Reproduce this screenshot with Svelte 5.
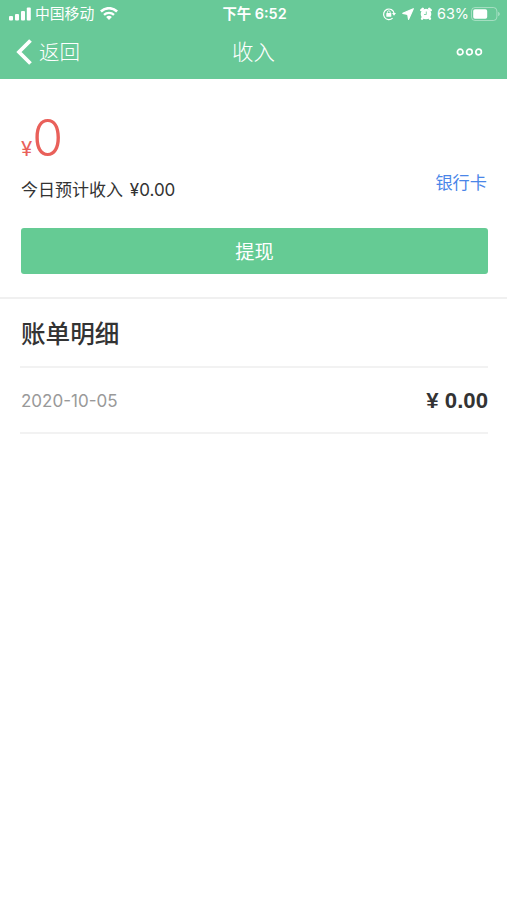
<script lang="ts">
  interface Bill {
    date: string;
    amount: string;
  }

  const bills: Bill[] = [{ date: '2020-10-05', amount: '0.00' }];
</script>

<div class="page">
  <header class="header">
    <div class="status-bar">
      <div class="status-left">
        <svg class="signal" viewBox="0 0 22 14" fill="currentColor">
          <rect x="0" y="9" width="4" height="4.5" rx="1" />
          <rect x="6" y="7" width="4" height="6.5" rx="1" />
          <rect x="12" y="4" width="4" height="9.5" rx="1" />
          <rect x="17.8" y="0.5" width="4" height="13" rx="1" />
        </svg>
        <span class="carrier">中国移动</span>
        <svg class="wifi" viewBox="0 0 18 13" fill="none" stroke="currentColor">
          <path d="M0.9 4.5a11.6 11.6 0 0 1 16.2 0" stroke-width="2.6" />
          <path d="M4 7.8a7.2 7.2 0 0 1 10 0" stroke-width="2.3" />
          <path d="M9 13l-2.9-2.9a4.1 4.1 0 0 1 5.8 0z" fill="currentColor" stroke="none" />
        </svg>
      </div>
      <span class="time">下午 6:52</span>
      <div class="status-right">
        <svg class="lock" viewBox="0 0 14 14" fill="none" stroke="currentColor">
          <path d="M10.6 11.1a5.3 5.3 0 1 1 1.5-4.8" stroke-width="1.2" />
          <path d="M10 6h4l-2 2.8z" fill="currentColor" stroke="none" />
          <rect x="4.3" y="6" width="5" height="3.8" rx="0.5" fill="currentColor" stroke="none" />
          <path d="M5.4 6.3V5.2a1.4 1.4 0 0 1 2.8 0v1.1" stroke-width="0.9" />
        </svg>
        <svg class="location" viewBox="0 0 12 12" fill="currentColor" stroke="currentColor" stroke-linejoin="round">
          <path d="M11.3 0.7L0.8 5.3l4.9 1.1 0.9 4.9z" stroke-width="1.2" />
        </svg>
        <svg class="alarm" viewBox="0 0 12 13" fill="none">
          <circle cx="6" cy="7" r="5.3" fill="currentColor" />
          <path d="M1.3 3.2L2.8 1.8M10.7 3.2L9.2 1.8M2.6 10.8l-0.5 0.9M9.4 10.8l0.5 0.9" stroke="currentColor" stroke-width="2.4" stroke-linecap="round" />
          <path d="M6.3 4.5v3H4" stroke="#68c998" stroke-width="0.8" />
        </svg>
        <span class="percent">63%</span>
        <svg class="battery" viewBox="0 0 29 14" fill="none">
          <rect x="0.5" y="0.5" width="25.4" height="13" rx="3.5" stroke="currentColor" opacity="0.4" />
          <rect x="2.2" y="2.2" width="14" height="9.6" rx="1.8" fill="currentColor" />
          <path d="M27.2 4.8c2 0.8 2 3.6 0 4.4z" fill="currentColor" opacity="0.45" />
        </svg>
      </div>
    </div>

    <nav class="nav">
      <button class="back">
        <svg viewBox="0 0 16 26" fill="none">
          <path d="M14.5 1.5L3 13l11.5 11.5" stroke="currentColor" stroke-width="3.8" />
        </svg>
        <span>返回</span>
      </button>
      <h1>收入</h1>
      <button class="more" aria-label="更多">
        <svg viewBox="0 0 27 8" fill="none" stroke="currentColor" stroke-width="1.7">
          <circle cx="4.2" cy="4" r="2.8" />
          <circle cx="13.4" cy="4" r="2.8" />
          <circle cx="22.6" cy="4" r="2.8" />
        </svg>
      </button>
    </nav>
  </header>

  <section class="summary">
    <div class="balance"><span class="currency">¥</span><span class="total">0</span></div>
    <div class="summary-row">
      <span class="estimate">今日预计收入 <span class="digits">¥0.00</span></span>
      <a class="card-link" href="#card">银行卡</a>
    </div>
    <button class="withdraw">提现</button>
  </section>

  <section class="bills">
    <h2>账单明细</h2>
    {#each bills as bill}
      <div class="bill">
        <span class="date">{bill.date}</span>
        <span class="amount">¥ {bill.amount}</span>
      </div>
    {/each}
  </section>
</div>

<style>
  :global(body) {
    background: #fff;
  }

  .page {
    min-height: 900px;
    color: #333;
    font-family: Inter, 'Noto Sans CJK SC', sans-serif;
  }

  svg {
    display: block;
    flex-shrink: 0;
  }

  button {
    border: none;
    padding: 0;
    background: none;
    color: inherit;
    font-family: inherit;
  }

  .header {
    height: 79px;
    background: #68c998;
    color: #fff;
  }

  .status-bar {
    display: grid;
    grid-template-columns: 1fr auto 1fr;
    align-items: center;
    height: 27px;
    padding: 0 7px 0 9px;
    font-size: 14.5px;
    line-height: 27px;
  }

  .status-left,
  .status-right {
    display: flex;
    align-items: center;
  }

  .status-right {
    justify-content: flex-end;
  }

  .signal {
    width: 22px;
    height: 14px;
  }

  .carrier {
    margin: 0 6px 0 4px;
    padding-top: 2px;
    font-size: 14.8px;
    line-height: 25px;
  }

  .wifi {
    width: 18px;
    height: 13px;
  }

  .time {
    font-size: 14.4px;
    font-weight: 600;
  }

  .lock {
    width: 14px;
    height: 14px;
    margin-right: 6px;
  }

  .location {
    width: 12px;
    height: 12px;
    margin-right: 6px;
  }

  .alarm {
    width: 12px;
    height: 13px;
    margin-right: 5px;
  }

  .percent {
    margin-right: 2px;
    font-size: 14.4px;
  }

  .battery {
    width: 29px;
    height: 14px;
  }

  .nav {
    display: grid;
    grid-template-columns: 1fr auto 1fr;
    align-items: center;
    height: 50px;
    padding: 0 16px;
  }

  .back {
    display: flex;
    align-items: center;
    gap: 7px;
    font-size: 20.5px;
    font-weight: 300;
    line-height: 30px;
  }

  .back svg {
    width: 16px;
    height: 26px;
  }

  .back span {
    padding-top: 2px;
  }

  .nav h1 {
    margin: 0;
    font-size: 21.5px;
    font-weight: 300;
    line-height: 30px;
  }

  .more {
    justify-self: end;
    margin-right: 8px;
  }

  .more svg {
    width: 27px;
    height: 8px;
  }

  .summary {
    height: 218px;
    padding: 0 20px 0 21px;
    border-bottom: 2px solid #f0f0f0;
  }

  .balance {
    height: 60px;
    padding-top: 29px;
    color: #e9605a;
    line-height: 60px;
  }

  .currency {
    font-size: 20.5px;
  }

  .total {
    font-size: 50px;
    font-weight: 300;
  }

  .summary-row {
    display: flex;
    justify-content: space-between;
    height: 60px;
    font-size: 17px;
  }

  .estimate {
    padding-top: 9px;
    line-height: 26px;
  }

  .digits {
    margin-left: 2px;
    font-size: 17px;
  }

  .card-link {
    padding-top: 2px;
    color: #4a86e8;
    font-size: 17.2px;
    line-height: 26px;
    text-decoration: none;
  }

  .withdraw {
    display: block;
    width: 467px;
    height: 46px;
    border-radius: 3px;
    background: #65cb94;
    color: #fff;
    font-size: 19.2px;
  }

  .bills {
    padding: 0 19px 0 20px;
  }

  .bills h2 {
    height: 65px;
    margin: 0;
    padding: 2px 0 0 1px;
    border-bottom: 2px solid #f2f2f2;
    font-size: 24.6px;
    font-weight: 500;
    line-height: 67px;
  }

  .bill {
    display: flex;
    align-items: center;
    justify-content: space-between;
    height: 64px;
    padding-left: 1px;
    border-bottom: 2px solid #f2f2f2;
  }

  .date {
    padding-top: 1px;
    color: #999;
    font-size: 17px;
  }

  .amount {
    padding-top: 2px;
    font-family: 'Liberation Sans', Arial, sans-serif;
    font-size: 22.2px;
    font-weight: 700;
  }
</style>
